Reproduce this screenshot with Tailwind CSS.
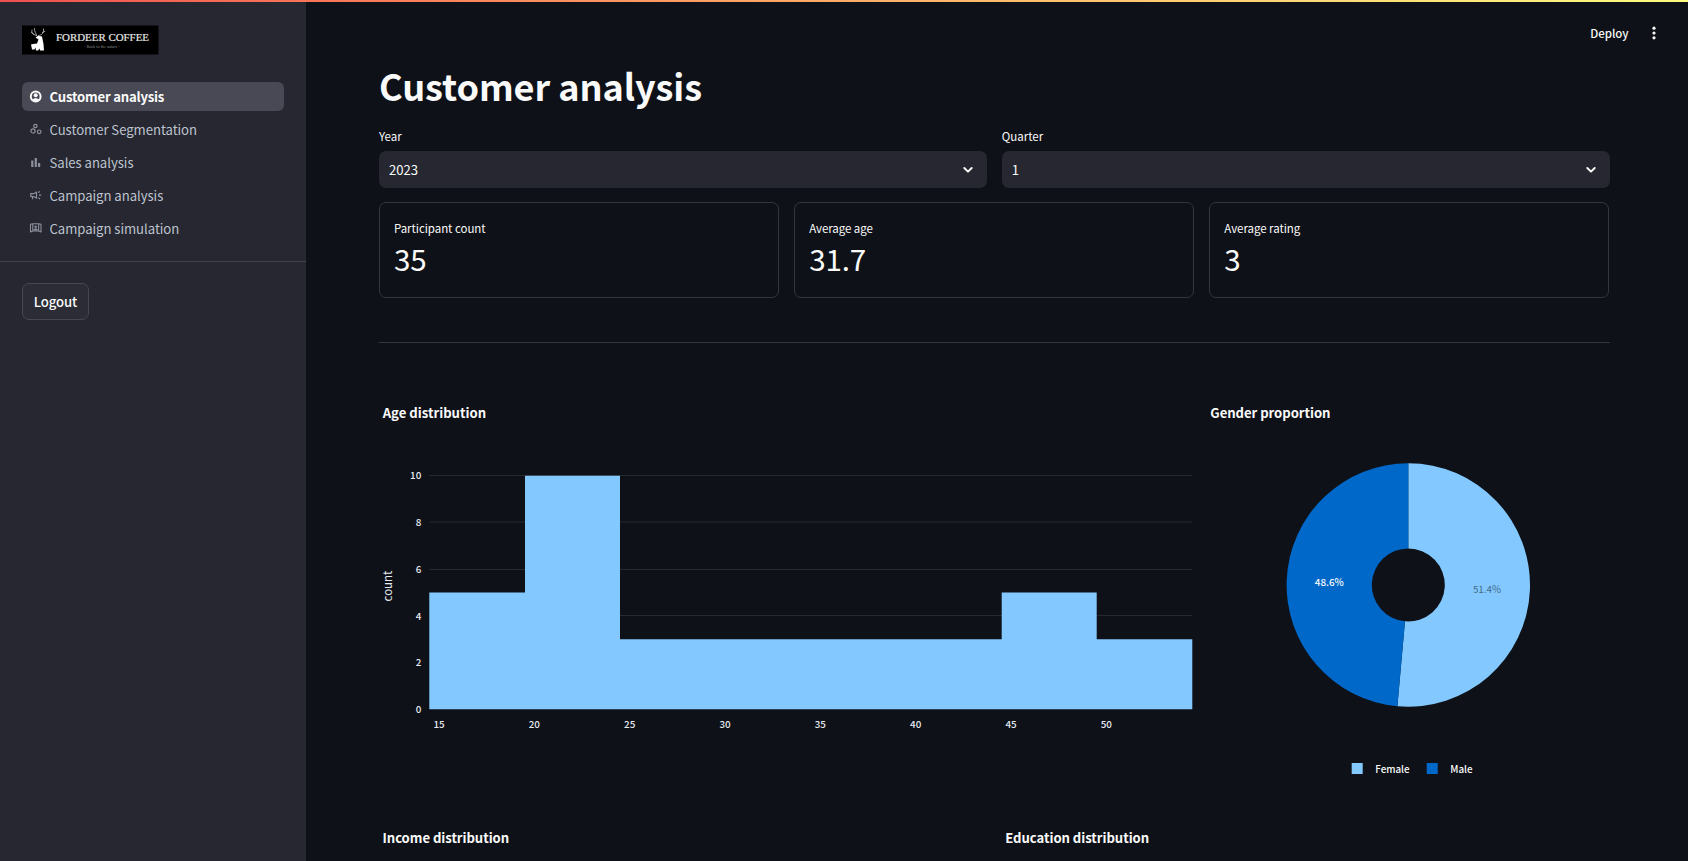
<!DOCTYPE html>
<html lang="en">
<head>
<meta charset="utf-8">
<title>Customer analysis</title>
<script src="https://cdn.jsdelivr.net/npm/@tailwindcss/browser@4"></script>
</head>
<body class="flex h-[861px] w-[1688px] overflow-hidden bg-[#0e1117] font-['Noto_Sans_CJK_SC',sans-serif] text-[13.14px] text-[#fafafa]">
  <div class="absolute inset-x-0 top-0 z-10 h-[2px] bg-linear-to-r from-[#f0504f] to-[#fdfd80]"></div>

  <aside class="flex w-[306px] shrink-0 flex-col bg-[#262730] pt-[25px]">
    <svg class="ml-[22px] h-[30px] w-[137px]" viewBox="0 0 137 30">
      <rect y="0.5" width="136.500" height="29" fill="#000"/>
      <g fill="none" stroke="#c8c8c8" stroke-width="0.8" stroke-linecap="round">
        <path d="M14.500 10.500C11 9.500 9 8 10 5M12 9.500L9.500 7.500M14.500 10.500C14.500 8 12 7 12.500 3.500M16.500 10.500C20 10 22 8 21.500 4M20.500 7.500L22.800 6.300"/>
      </g>
      <path fill="#fff" d="M13.500 12.500L16 10.800L20 11.500L20.500 14L21.500 19L22 25.500H18L17.500 23.500L16 25.500H14L13.500 22.500L12.500 24.500H10L9 19.500L11 19L15 18.500L16.500 14.500Z"/>
      <text x="34" y="15.500" textLength="93" lengthAdjust="spacingAndGlyphs" fill="#e4e4e4" font-size="10" font-family="Liberation Serif, serif" stroke="#e4e4e4" stroke-width="0.2">FORDEER COFFEE</text>
      <text x="62" y="23" textLength="36" lengthAdjust="spacingAndGlyphs" fill="#8a8a8a" font-size="4" font-family="Liberation Serif, serif">- Back to the nature -</text>
    </svg>

    <nav class="mx-[22px] mt-[27px] flex flex-col gap-1 text-[#bdc3cf]">
      <a class="flex h-[29px] items-center gap-[6.5px] rounded-md bg-[#484954] pl-[7px] font-bold text-[#fafafa]">
        <svg class="size-[14px]" viewBox="0 0 14 14"><circle cx="6.700" cy="6.500" r="4.900" fill="none" stroke="#fafafa" stroke-width="2"/><circle cx="6.700" cy="5.300" r="2" fill="#fafafa"/><path fill="#fafafa" d="M3.200 10C4.200 7.800 9.200 7.800 10.200 10L6.700 12Z"/></svg>
        <span class="tracking-[-0.2px]">Customer analysis</span>
      </a>
      <a class="flex h-[29px] items-center gap-[6.5px] pl-[7px] tracking-[-0.04px]">
        <svg class="size-[14px]" viewBox="0 0 14 14" fill="none" stroke="#8d909c" stroke-width="1.200"><circle cx="6.400" cy="3" r="1.700"/><circle cx="4" cy="7.900" r="2.100"/><circle cx="10.200" cy="8.800" r="1.800"/></svg>
        <span>Customer Segmentation</span>
      </a>
      <a class="flex h-[29px] items-center gap-[6.5px] pl-[7px] tracking-[-0.04px]">
        <svg class="size-[14px]" viewBox="0 0 14 14" fill="#8d909c"><path d="M2.200 4.500h2.200v6.500h-2.200zM5.700 2h2.200v9h-2.200zM9 7h2.200v4h-2.200z"/></svg>
        <span>Sales analysis</span>
      </a>
      <a class="flex h-[29px] items-center gap-[6.5px] pl-[7px] tracking-[-0.04px]">
        <svg class="size-[14px]" viewBox="0 0 14 14" fill="none" stroke="#8d909c" stroke-width="1.200"><path d="M1.800 4.700H4.500L7.500 3.200V9L4.500 7.500H1.800ZM3.500 7.500V10.200M9.300 3.600L10.900 2.400M10 6.200H12.200M9.300 8.800L10.900 10"/></svg>
        <span>Campaign analysis</span>
      </a>
      <a class="flex h-[29px] items-center gap-[6.5px] pl-[7px] tracking-[-0.04px]">
        <svg class="size-[14px]" viewBox="0 0 14 14" fill="none" stroke="#8d909c" stroke-width="1.100" stroke-linejoin="round"><path d="M1.500 2.200L3.800 1.700H9.600L12 2.200V10L9.600 9H3.800L1.500 10ZM3.800 1.700V9M9.600 1.700V9M5.200 7.800H8.200L6.700 6.700Z"/><circle cx="6.700" cy="4.700" r="0.700"/></svg>
        <span>Campaign simulation</span>
      </a>
    </nav>
    <div class="mt-[18px] h-px bg-[#41434c]"></div>
    <button class="mt-[21px] ml-[22px] flex h-[37px] w-[67px] items-center justify-center rounded-[7px] border border-[#464851] bg-[#2b2c36] font-medium tracking-[-0.1px]">Logout</button>
  </aside>

  <main class="flex grow flex-col">
    <header class="flex h-[66px] items-center justify-end pr-[29.5px]">
      <span class="mr-[20px] pt-px text-[11.5px] font-medium tracking-[-0.05px]">Deploy</span>
      <svg class="h-4 w-[10px]" viewBox="0 0 10 16" fill="#fafafa"><circle cx="5" cy="3.200" r="1.600"/><circle cx="5" cy="8" r="1.600"/><circle cx="5" cy="12.800" r="1.600"/></svg>
    </header>

    <div class="ml-[73px] flex w-[1230.5px] flex-col">
      <h1 class="-mt-[3px] h-[67px] text-[36.1px] leading-[44px] font-bold tracking-[-0.09px]">Customer analysis</h1>

      <div class="grid grid-cols-2 gap-[15px]">
        <label class="flex flex-col">
          <span class="h-[21px] text-[11.5px] leading-[13px]">Year</span>
          <span class="flex h-[37px] items-center justify-between rounded-[7px] bg-[#262730] pr-[14px] pl-[10px]">
            <span>2023</span>
            <svg class="h-2 w-[10px]" viewBox="0 0 10 8" fill="none" stroke="#fafafa" stroke-width="1.900" stroke-linecap="round" stroke-linejoin="round"><path d="M1.300 2L5 5.700L8.700 2"/></svg>
          </span>
        </label>
        <label class="flex flex-col">
          <span class="h-[21px] text-[11.5px] leading-[13px]">Quarter</span>
          <span class="flex h-[37px] items-center justify-between rounded-[7px] bg-[#262730] pr-[14px] pl-[10px]">
            <span>1</span>
            <svg class="h-2 w-[10px]" viewBox="0 0 10 8" fill="none" stroke="#fafafa" stroke-width="1.900" stroke-linecap="round" stroke-linejoin="round"><path d="M1.300 2L5 5.700L8.700 2"/></svg>
          </span>
        </label>
      </div>

      <div class="mt-[14px] grid grid-cols-3 gap-[15px]">
        <div class="flex h-[96px] flex-col rounded-[7px] border border-[#33363e] px-[14px] pt-[15px]">
          <span class="text-[11.5px] leading-5 tracking-[-0.05px]">Participant count</span>
          <span class="text-[29.55px] leading-[42px] tracking-[-0.1px]">35</span>
        </div>
        <div class="flex h-[96px] flex-col rounded-[7px] border border-[#33363e] px-[14px] pt-[15px]">
          <span class="text-[11.5px] leading-5 tracking-[-0.05px]">Average age</span>
          <span class="text-[29.55px] leading-[42px] tracking-[-0.1px]">31.7</span>
        </div>
        <div class="flex h-[96px] flex-col rounded-[7px] border border-[#33363e] px-[14px] pt-[15px]">
          <span class="text-[11.5px] leading-5 tracking-[-0.05px]">Average rating</span>
          <span class="text-[29.55px] leading-[42px] tracking-[-0.1px]">3</span>
        </div>
      </div>

      <div class="mt-[44px] h-px bg-[#33363e]"></div>

      <div class="mt-[47px] flex gap-[13px]">
        <!-- Histogram: 23.37px per count, 19.07px per year of age -->
        <svg class="h-[420px] w-[816px] shrink-0" viewBox="379 390 816 420" fill="#fafafa">
          <text x="382.700" y="417.700" font-size="13.140" font-weight="700">Age distribution</text>
          <path stroke="#262930" d="M429.300 475.500H1192M429.300 522H1192M429.300 569.500H1192M429.300 615.500H1192"/>
          <path fill="#83c9ff" d="M429.300 709.300V592.500H525V475.700H620V639.200H1001.700V592.500H1096.700V639.200H1192.300V709.300Z"/>
          <g font-size="9.850" font-weight="500" text-anchor="end" fill="#e6eaf1">
            <text x="421.300" y="479.300">10</text>
            <text x="421.300" y="526">8</text>
            <text x="421.300" y="572.700">6</text>
            <text x="421.300" y="619.500">4</text>
            <text x="421.300" y="666.200">2</text>
            <text x="421.300" y="713">0</text>
          </g>
          <g font-size="9.850" font-weight="500" text-anchor="middle" fill="#e6eaf1">
            <text x="439" y="728.300">15</text>
            <text x="534.300" y="728.300">20</text>
            <text x="629.700" y="728.300">25</text>
            <text x="725" y="728.300">30</text>
            <text x="820.300" y="728.300">35</text>
            <text x="915.700" y="728.300">40</text>
            <text x="1011" y="728.300">45</text>
            <text x="1106.300" y="728.300">50</text>
          </g>
          <text transform="translate(392 586) rotate(-90)" font-size="11.500" text-anchor="middle" fill="#e6eaf1">count</text>
        </svg>
        <!-- Donut: 18 of 35 female -->
        <svg class="h-[420px] w-[401px] shrink-0" viewBox="1208 390 401 420" fill="#fafafa">
          <text x="1210.300" y="417.700" font-size="13.140" font-weight="700" letter-spacing="-0.050">Gender proportion</text>
          <path fill="#83c9ff" d="M1408.300 463.300A121.700 121.700 0 1 1 1397.400 706.210L1405 621.350A36.500 36.500 0 1 0 1408.300 548.500Z"/>
          <path fill="#0068c9" d="M1408.300 463.300A121.700 121.700 0 0 0 1397.400 706.210L1405 621.350A36.500 36.500 0 0 1 1408.300 548.500Z"/>
          <g font-size="9.850">
            <text x="1487" y="592.800" text-anchor="middle" fill="#446a88">51.4%</text>
            <text x="1329.300" y="585.500" text-anchor="middle" font-weight="500">48.6%</text>
            <rect x="1351.700" y="763" width="11" height="11" fill="#83c9ff"/>
            <text x="1375.300" y="773.300" font-weight="500" letter-spacing="-0.050">Female</text>
            <rect x="1426.700" y="763" width="11" height="11" fill="#0068c9"/>
            <text x="1450.300" y="773.300" font-weight="500" letter-spacing="-0.050">Male</text>
          </g>
        </svg>
      </div>

      <div class="mt-[18px] grid grid-cols-2 gap-[15px] leading-5 font-bold tracking-[-0.05px]">
        <h2 class="pl-[3.5px]">Income distribution</h2>
        <h2 class="pl-[3.5px]">Education distribution</h2>
      </div>
    </div>
  </main>
</body>
</html>
